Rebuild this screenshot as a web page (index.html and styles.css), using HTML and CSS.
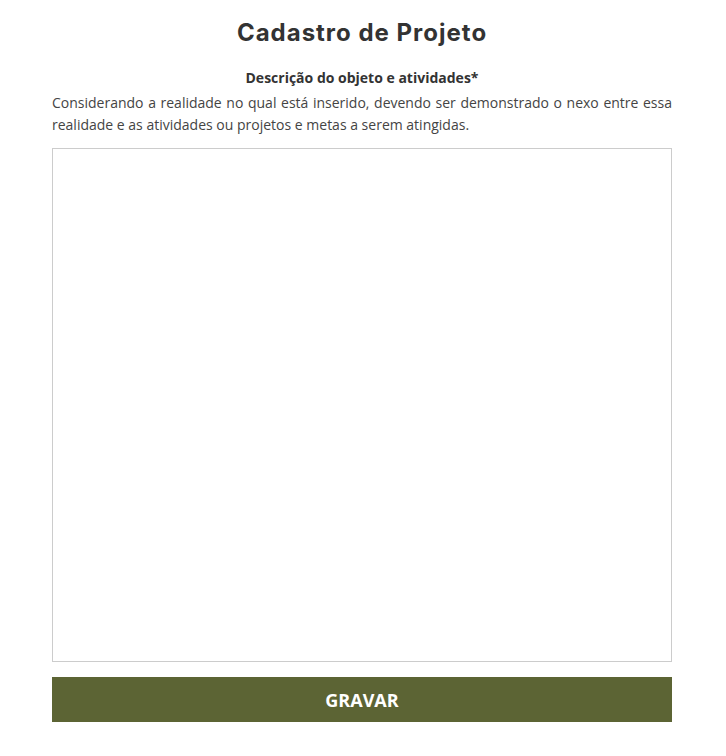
FILE: index.html
```html
<!DOCTYPE html>
<html lang="pt-BR">
<head>
<meta charset="utf-8">
<title>Cadastro de Projeto</title>
<link rel="stylesheet" href="styles.css">
</head>
<body>
<main class="page">
  <h1 class="title">Cadastro de Projeto</h1>
  <form class="form">
    <label class="label" for="descricao">Descrição do objeto e atividades*</label>
    <p class="help">Considerando a realidade no qual está inserido, devendo ser demonstrado o nexo entre essa realidade e as atividades ou projetos e metas a serem atingidas.</p>
    <textarea class="textarea" id="descricao"></textarea>
    <button type="button" class="btn">GRAVAR</button>
  </form>
</main>
</body>
</html>
```
FILE: styles.css
```css
html, body {
  margin: 0;
  padding: 0;
  background: #fff;
}
body {
  font-family: "Open Sans", "Liberation Sans", sans-serif;
  color: #333;
}
.page {
  width: 620px;
  margin: 0 54px 0 52px;
  padding-top: 18px;
}
.title {
  margin: 0;
  text-align: center;
  font-family: "Inter", "Open Sans", sans-serif;
  font-weight: 700;
  font-size: 24px;
  line-height: 30px;
  letter-spacing: 1px;
  color: #333;
}
.form {
  display: flex;
  flex-direction: column;
  margin-top: 20px;
}
.label {
  text-align: center;
  font-weight: 700;
  font-size: 14px;
  line-height: 20px;
  color: #333;
}
.help {
  margin: 4px 0 0;
  font-size: 14px;
  line-height: 22px;
  text-align: justify;
  color: #444;
}
.textarea {
  margin-top: 12px;
  height: 514px;
  box-sizing: border-box;
  border: 1px solid #ccc;
  border-radius: 0;
  resize: none;
  padding: 6px;
  font-family: inherit;
}
.btn {
  margin-top: 15px;
  height: 45px;
  border: 0;
  background: #5c6434;
  color: #fff;
  font-family: "Open Sans", sans-serif;
  font-weight: 700;
  font-size: 18px;
  cursor: pointer;
}
```
